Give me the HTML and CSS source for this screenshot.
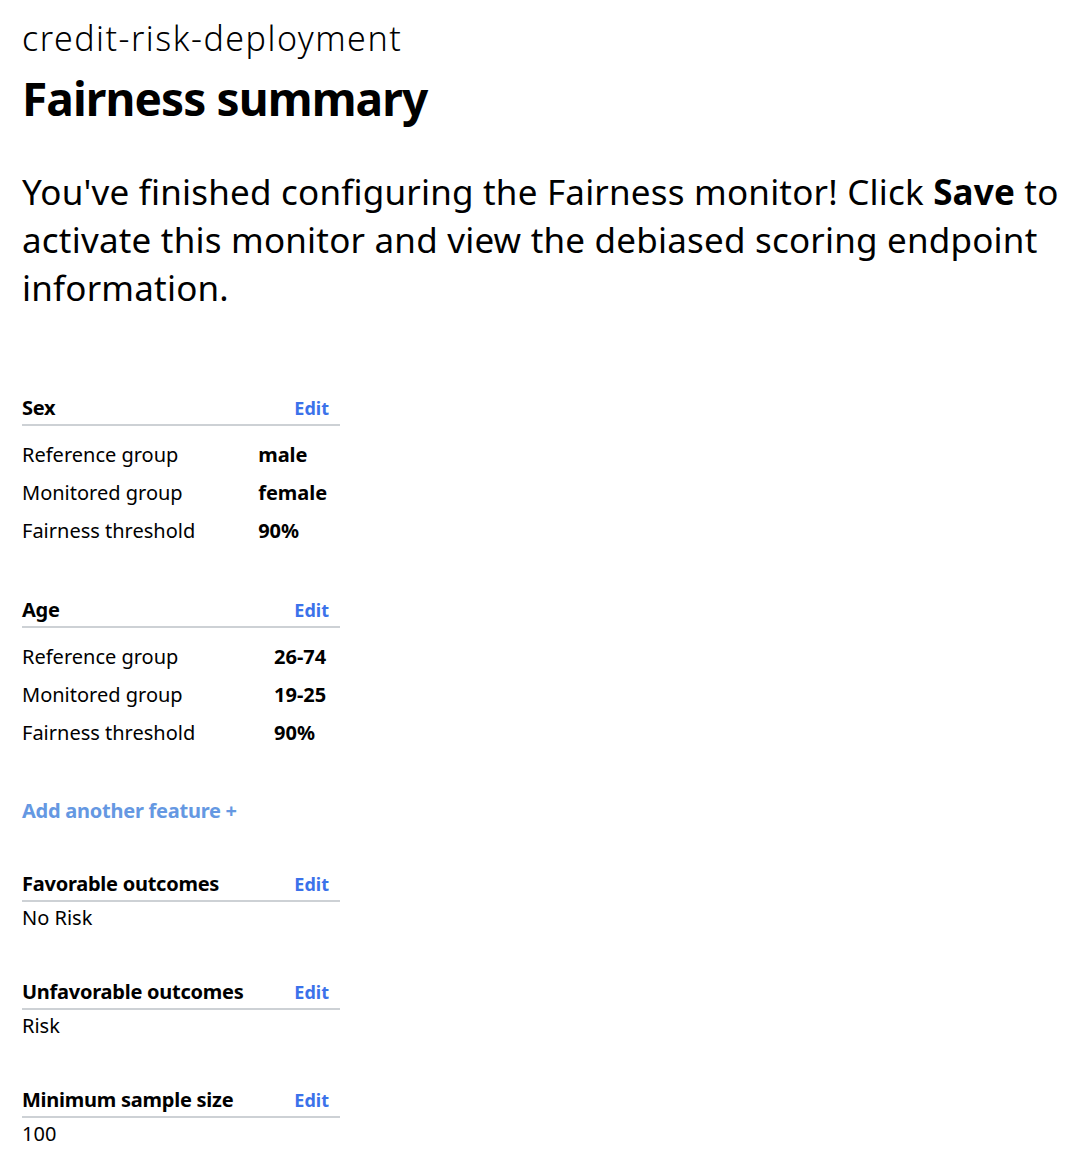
FILE: index.html
```html
<!DOCTYPE html>
<html lang="en">
<head>
<meta charset="utf-8">
<title>Fairness summary</title>
<link rel="stylesheet" href="styles.css">
</head>
<body>
<main class="page">
  <header class="page-header">
    <div class="deployment">credit-risk-deployment</div>
    <h1 class="title">Fairness summary</h1>
    <p class="intro">You've finished configuring the Fairness monitor! Click <strong>Save</strong> to activate this monitor and view the debiased scoring endpoint information.</p>
  </header>

  <section class="feature feature-sex">
    <div class="section-head"><span class="section-title">Sex</span><a class="edit" href="#">Edit</a></div>
    <table class="details">
      <tr><td class="label">Reference group</td><td class="value">male</td></tr>
      <tr><td class="label">Monitored group</td><td class="value">female</td></tr>
      <tr><td class="label">Fairness threshold</td><td class="value">90%</td></tr>
    </table>
  </section>

  <section class="feature feature-age">
    <div class="section-head"><span class="section-title">Age</span><a class="edit" href="#">Edit</a></div>
    <table class="details">
      <tr><td class="label">Reference group</td><td class="value">26-74</td></tr>
      <tr><td class="label">Monitored group</td><td class="value">19-25</td></tr>
      <tr><td class="label">Fairness threshold</td><td class="value">90%</td></tr>
    </table>
  </section>

  <a class="add-feature" href="#">Add another feature +</a>

  <section class="outcome outcome-first">
    <div class="section-head"><span class="section-title">Favorable outcomes</span><a class="edit" href="#">Edit</a></div>
    <div class="outcome-value">No Risk</div>
  </section>

  <section class="outcome">
    <div class="section-head"><span class="section-title">Unfavorable outcomes</span><a class="edit" href="#">Edit</a></div>
    <div class="outcome-value">Risk</div>
  </section>

  <section class="outcome">
    <div class="section-head"><span class="section-title">Minimum sample size</span><a class="edit" href="#">Edit</a></div>
    <div class="outcome-value">100</div>
  </section>
</main>
</body>
</html>
```

FILE: styles.css
```css
* { box-sizing: border-box; }

body {
  margin: 0;
  background: #ffffff;
  color: #000000;
  font-family: "Noto Sans", "Open Sans", sans-serif;
}

.page {
  padding: 14px 22px 20px 22px;
}

.deployment {
  font-size: 34px;
  font-weight: 300;
  line-height: 48px;
  letter-spacing: 1.5px;
}

.title {
  margin: 6px 0 0 0;
  font-size: 46px;
  font-weight: 700;
  line-height: 60px;
  letter-spacing: -0.9px;
}

.intro {
  margin: 40px 0 0 0;
  width: 1060px;
  font-size: 35px;
  line-height: 48px;
  letter-spacing: 0.2px;
}

.intro strong { font-weight: 700; }

.feature, .outcome {
  width: 318px;
}

.feature-sex { margin-top: 84px; }
.feature-age { margin-top: 48px; }

.section-head {
  display: flex;
  justify-content: space-between;
  align-items: baseline;
  border-bottom: 2px solid #cdd1d5;
  padding-bottom: 4px;
  line-height: 24px;
}

.section-title {
  font-size: 20px;
  font-weight: 700;
  letter-spacing: -0.25px;
}

.edit {
  font-size: 18px;
  font-weight: 700;
  color: #3b72ea;
  text-decoration: none;
  margin-right: 11px;
}

.details {
  width: 100%;
  border-collapse: collapse;
  margin-top: 10px;
}

.details td {
  padding: 0;
  height: 38px;
  font-size: 20px;
  line-height: 24px;
}

.details .label { padding-right: 26px; }

.details .value { font-weight: 700; }

.add-feature {
  display: block;
  margin-top: 47px;
  font-size: 20px;
  font-weight: 700;
  line-height: 24px;
  letter-spacing: -0.25px;
  color: #6598e2;
  text-decoration: none;
}

.outcome { margin-top: 50px; }
.outcome-first { margin-top: 49px; }

.outcome-value {
  font-size: 20px;
  line-height: 24px;
  margin-top: 4px;
}
```
